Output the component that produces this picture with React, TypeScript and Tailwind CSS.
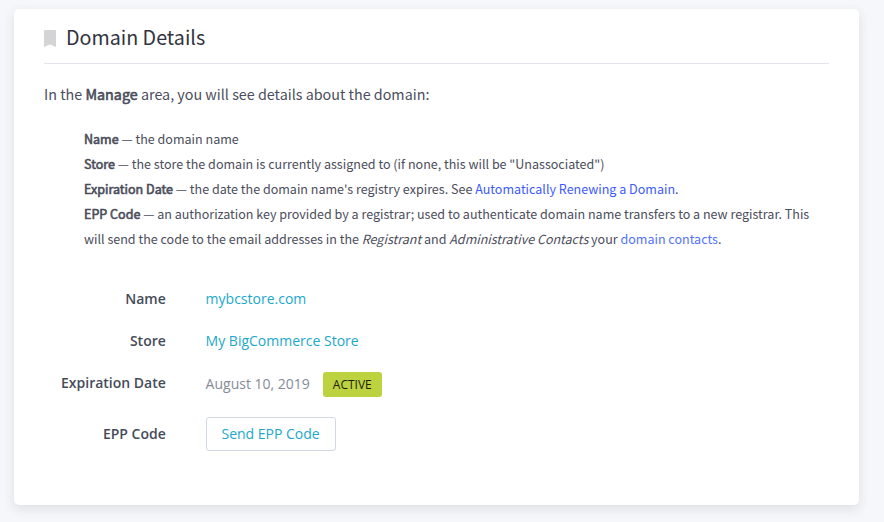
import type { ReactNode } from 'react';

interface DetailRowProps {
    label: string;
    className: string;
    labelClassName?: string;
    children: ReactNode;
}

function DetailRow({ label, className, labelClassName = '', children }: DetailRowProps) {
    return (
        <div className={`flex items-center ${className}`}>
            <div className={`w-[121.8px] text-right font-semibold text-[#454c59] ${labelClassName}`}>
                {label}
            </div>
            <div className="ml-[39.8px] flex items-center">{children}</div>
        </div>
    );
}

function Term({ children }: { children: ReactNode }) {
    return <b className="font-normal [-webkit-text-stroke:0.6px_#4b4d5b]">{children}</b>;
}

export default function App() {
    return (
        <div className="h-[522px] overflow-hidden bg-[#f5f7fa] pl-[14px] pt-[9px]">
            <section className="h-[496px] w-[845px] rounded-[5px] bg-white px-[30px] shadow-[0_4px_12px_rgba(49,52,64,0.12)] font-['Noto_Sans_CJK_SC',sans-serif] text-[#4b4d5b]">
                <header className="flex h-[55px] items-center border-b border-[#e3e4ec]">
                    <svg className="mt-1 h-[17px] w-3" viewBox="0 0 12 17" fill="#d4d4d7">
                        <path d="M1 0h10A1 1 0 0 1 12 1V17l-6-2.6-6 2.6V1A1 1 0 0 1 1 0z" />
                    </svg>
                    <h2 className="ml-[10px] mt-[2px] text-[19.7px] leading-7 text-[#313440]">Domain Details</h2>
                </header>

                <p className="mt-[17px] text-[14.34px] leading-[26px]">
                    In the <Term>Manage</Term> area, you will see details about the domain:
                </p>

                <div className="mt-[19px] pl-10 text-[12.54px] leading-[25px] whitespace-nowrap">
                    <p>
                        <Term>Name</Term> — the domain name
                    </p>
                    <p>
                        <Term>Store</Term> — the store the domain is currently assigned to (if none, this will be "Unassociated")
                    </p>
                    <p>
                        <Term>Expiration Date</Term> — the date the domain name's registry expires. See{' '}
                        <a className="text-[#3d5afe]">Automatically Renewing a Domain</a>.
                    </p>
                    <p>
                        <Term>EPP Code</Term> — an authorization key provided by a registrar; used to authenticate domain name transfers to a new registrar. This
                        <br />
                        will send the code to the email addresses in the <i>Registrant</i> and{' '}
                        <i>Administrative Contacts</i> your <a className="text-[#5273fb]">domain contacts</a>.
                    </p>
                </div>

                <div className="mt-[38px] font-['Open_Sans',sans-serif] text-[14px] leading-5">
                    <DetailRow label="Name" className="h-5">
                        <a className="text-[#1ba8c9]">mybcstore.com</a>
                    </DetailRow>
                    <DetailRow label="Store" className="mt-[22px] h-5">
                        <a className="text-[#1ba8c9]">My BigCommerce Store</a>
                    </DetailRow>
                    <DetailRow label="Expiration Date" className="mt-[21px] h-[25px]" labelClassName="-mt-[3px]">
                        <span className="-mt-px text-[#848b98]">August 10, 2019</span>
                        <span className="ml-[13px] flex h-[25px] w-[59px] items-center justify-center rounded-[3px] bg-[#bcd33f] text-[12px] text-[#1d2010]">
                            ACTIVE
                        </span>
                    </DetailRow>
                    <DetailRow label="EPP Code" className="mt-5 h-[34px]">
                        <button className="h-[34px] w-[130px] rounded-[3px] border border-[#cfd9e3] text-[#1ba8c9]">
                            Send EPP Code
                        </button>
                    </DetailRow>
                </div>
            </section>
        </div>
    );
}
